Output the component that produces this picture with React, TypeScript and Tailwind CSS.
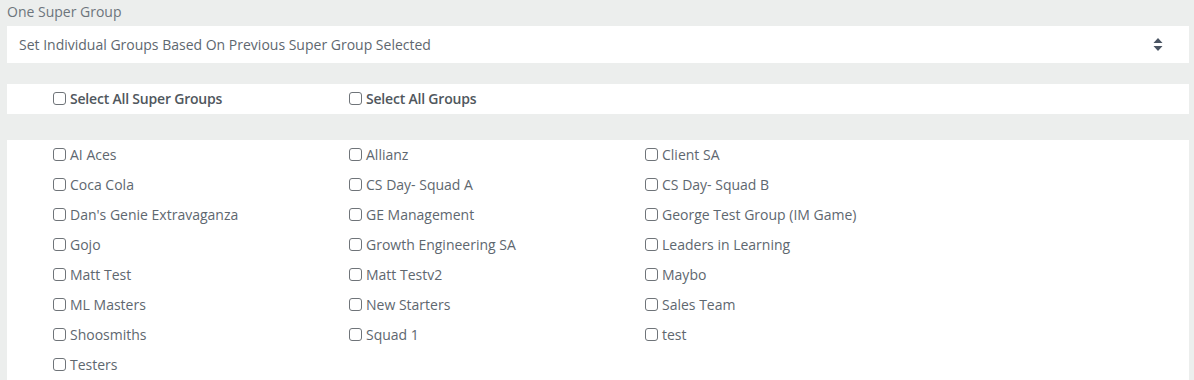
const groups = [
  "AI Aces", "Allianz", "Client SA",
  "Coca Cola", "CS Day- Squad A", "CS Day- Squad B",
  "Dan's Genie Extravaganza", "GE Management", "George Test Group (IM Game)",
  "Gojo", "Growth Engineering SA", "Leaders in Learning",
  "Matt Test", "Matt Testv2", "Maybo",
  "ML Masters", "New Starters", "Sales Team",
  "Shoosmiths", "Squad 1", "test",
  "Testers",
];

function Box() {
  return <span className="inline-block w-[13px] h-[13px] border border-[#6f7479] rounded-[3px] bg-white mr-[4px] shrink-0" />;
}

function Check({ label, bold }: { label: string; bold?: boolean }) {
  return (
    <label className={`flex items-center h-[30px] pb-[2px] ${bold ? "font-semibold tracking-[-0.2px] text-[#50575d]" : "text-[#5e676f]"}`}>
      <Box />
      <span>{label}</span>
    </label>
  );
}

export default function App() {
  return (
    <div className="w-full h-[380px] overflow-hidden bg-[#eceeed] pl-[7px] pr-[5px] font-['Open_Sans',sans-serif] text-[14px]">
      <div className="pt-[2px] h-[26px] text-[14px] leading-[20px] text-[#6d757c]">One Super Group</div>
      <div className="h-[37px] bg-white flex items-center justify-between pl-[12px] pr-[26px] text-[14px] text-[#5e676f]">
        <span>Set Individual Groups Based On Previous Super Group Selected</span>
        <svg width="10" height="14" viewBox="0 0 10 14" className="text-[#4a5462]">
          <path d="M5 0 L9.5 5 L0.5 5 Z" fill="currentColor" />
          <path d="M0.5 8 L9.5 8 L5 13 Z" fill="currentColor" />
        </svg>
      </div>
      <div className="mt-[21px] h-[30px] bg-white grid grid-cols-[296px_296px_1fr] pl-[46px]">
        <Check label="Select All Super Groups" bold />
        <Check label="Select All Groups" bold />
      </div>
      <div className="mt-[26px] bg-white grid grid-cols-[296px_296px_1fr] pl-[46px] pb-4">
        {groups.map((g) => (
          <Check key={g} label={g} />
        ))}
      </div>
    </div>
  );
}
